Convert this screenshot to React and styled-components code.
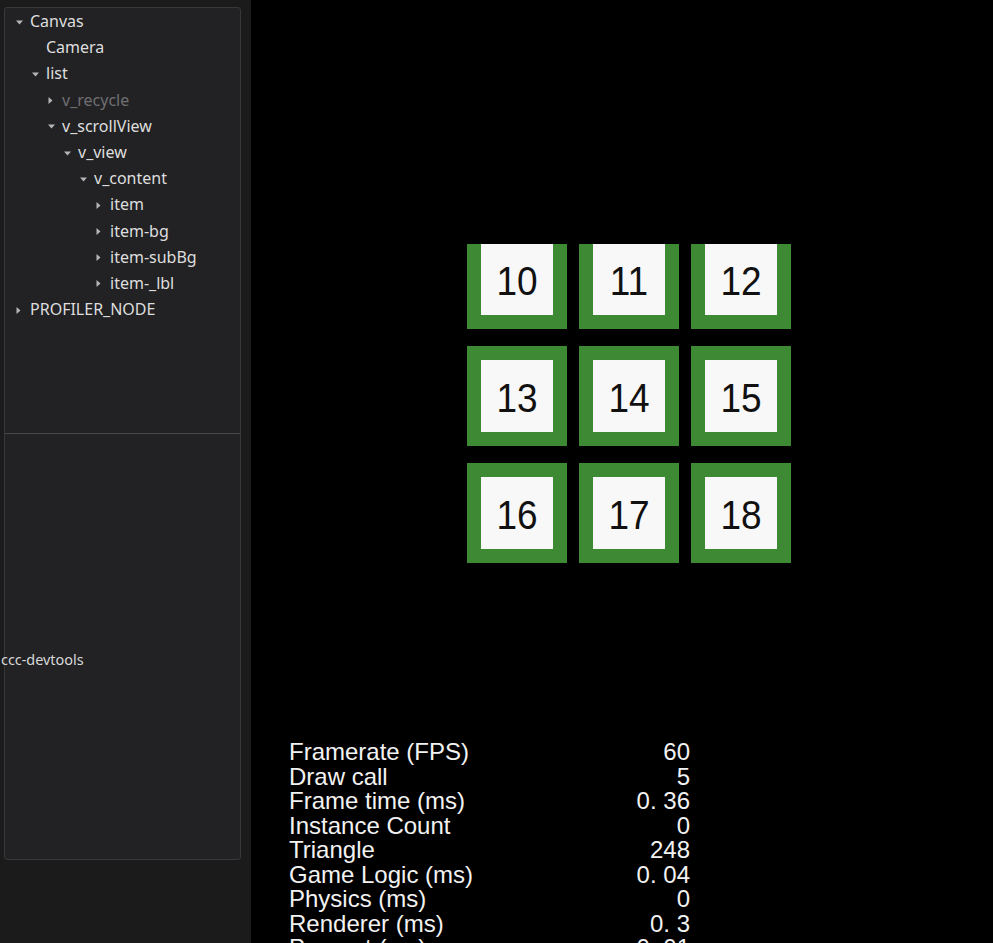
import React from "react";
import styled, { createGlobalStyle } from "styled-components";

const Global = createGlobalStyle`
  html, body { margin: 0; padding: 0; background: #1b1b1c; }
  body { font-family: "Noto Sans", "Liberation Sans", sans-serif; overflow: hidden; }
  * { box-sizing: border-box; }
`;

const Page = styled.div`
  display: flex;
  width: 993px;
  height: 943px;
  overflow: hidden;
`;

const Side = styled.div`
  position: relative;
  width: 251px;
  flex: none;
  padding: 7px 10px 0 4px;
  background: #1b1b1c;
`;

const Panel = styled.div`
  width: 237px;
  height: 853px;
  background: #222224;
  border: 1px solid #38383a;
  border-radius: 3px;
  display: flex;
  flex-direction: column;
`;

const TreeArea = styled.div`
  height: 426px;
  padding-top: 1px;
  border-bottom: 1px solid #47474a;
  flex: none;
`;

const Lower = styled.div`
  flex: 1;
`;

const Row = styled.div`
  display: flex;
  align-items: center;
  height: 26.2px;
  padding-left: ${(p) => 9 + p.$depth * 16}px;
  font-size: 16px;
  color: ${(p) => (p.$dim ? "#6f6f72" : "#dedede")};
  white-space: nowrap;
`;

const Arrow = styled.span`
  width: 16px;
  flex: none;
  display: flex;
  align-items: center;
  justify-content: flex-start;
  padding-left: 2px;
  svg { display: block; }
`;

const Label = styled.span`
  line-height: 1;
  position: relative;
  top: -1px;
`;

const Brand = styled.div`
  position: absolute;
  left: 1px;
  top: 650px;
  font-size: 14.4px;
  color: #d8d8d8;
  font-family: "Noto Sans", sans-serif;
`;

const Stage = styled.div`
  flex: 1;
  background: #000;
  display: flex;
  flex-direction: column;
`;

const Viewport = styled.div`
  flex: none;
  margin-top: 244px;
  margin-left: 216px;
  width: 324px;
  height: 320px;
  overflow: hidden;
`;

const Grid = styled.div`
  margin-top: -15px;
  display: grid;
  grid-template-columns: repeat(3, 100px);
  grid-auto-rows: 100px;
  column-gap: 12px;
  row-gap: 17px;
`;

const Tile = styled.div`
  background: #3e8a34;
  padding: 14px;
  display: flex;
`;

const TileFace = styled.div`
  flex: 1;
  background: #f8f8f8;
  display: flex;
  align-items: center;
  justify-content: center;
  padding-top: 5px;
  font-family: "Liberation Sans", Arial, sans-serif;
  font-size: 37px;
  color: #111;
  span { display: inline-block; transform: scaleY(1.12); }
`;

const Stats = styled.div`
  flex: none;
  margin-top: 176px;
  margin-left: 38px;
  width: 401px;
  font-family: "Liberation Sans", Arial, sans-serif;
  font-size: 24px;
  color: #f2f2f2;
`;

const StatRow = styled.div`
  display: flex;
  justify-content: space-between;
  height: 24.5px;
  line-height: 24.5px;
  white-space: nowrap;
`;

const Down = () => (
  <svg width="7" height="5" viewBox="0 0 7 5">
    <path d="M0 0.5 L7 0.5 L3.5 4.5 Z" fill="#b5b5b5" />
  </svg>
);
const Right = () => (
  <svg width="5" height="7" viewBox="0 0 5 7">
    <path d="M0.5 0 L4.5 3.5 L0.5 7 Z" fill="#b5b5b5" />
  </svg>
);

const tree = [
  { name: "Canvas", d: 0, a: "down" },
  { name: "Camera", d: 1 },
  { name: "list", d: 1, a: "down" },
  { name: "v_recycle", d: 2, a: "right", dim: true },
  { name: "v_scrollView", d: 2, a: "down" },
  { name: "v_view", d: 3, a: "down" },
  { name: "v_content", d: 4, a: "down" },
  { name: "item", d: 5, a: "right" },
  { name: "item-bg", d: 5, a: "right" },
  { name: "item-subBg", d: 5, a: "right" },
  { name: "item-_lbl", d: 5, a: "right" },
  { name: "PROFILER_NODE", d: 0, a: "right" },
];

const stats = [
  ["Framerate (FPS)", "60"],
  ["Draw call", "5"],
  ["Frame time (ms)", "0. 36"],
  ["Instance Count", "0"],
  ["Triangle", "248"],
  ["Game Logic (ms)", "0. 04"],
  ["Physics (ms)", "0"],
  ["Renderer (ms)", "0. 3"],
  ["Present (ms)", "0. 01"],
];

export default function App() {
  return (
    <Page>
      <Global />
      <Side>
        <Panel>
          <TreeArea>
            {tree.map((n) => (
              <Row key={n.name} $depth={n.d} $dim={n.dim}>
                <Arrow>{n.a === "down" ? <Down /> : n.a === "right" ? <Right /> : null}</Arrow>
                <Label>{n.name}</Label>
              </Row>
            ))}
          </TreeArea>
          <Lower />
        </Panel>
        <Brand>ccc-devtools</Brand>
      </Side>
      <Stage>
        <Viewport>
          <Grid>
            {[10, 11, 12, 13, 14, 15, 16, 17, 18].map((n) => (
              <Tile key={n}>
                <TileFace><span>{n}</span></TileFace>
              </Tile>
            ))}
          </Grid>
        </Viewport>
        <Stats>
          {stats.map(([k, v]) => (
            <StatRow key={k}>
              <span>{k}</span>
              <span>{v}</span>
            </StatRow>
          ))}
        </Stats>
      </Stage>
    </Page>
  );
}
